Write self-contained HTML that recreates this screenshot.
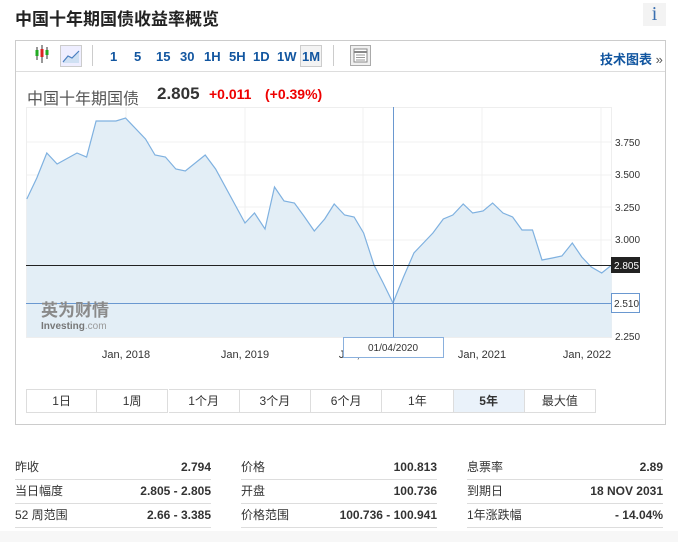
<!DOCTYPE html>
<html><head><meta charset="utf-8"><style>
*{margin:0;padding:0;box-sizing:border-box}
body{width:678px;height:542px;background:#fff;font-family:"Liberation Sans","Noto Sans CJK SC",sans-serif;position:relative;overflow:hidden;color:#333}
.a{position:absolute;white-space:nowrap}
.tb{color:#1256a0;font-weight:bold;font-size:13px;top:49px}
.btn{position:absolute;top:389px;height:24px;width:71.25px;border:1px solid #ddd;border-left:none;font-size:12px;text-align:center;line-height:22px;color:#333}
.row{position:absolute;height:24px;border-bottom:1px solid #ddd;font-size:12px;line-height:22px}
.row .v{position:absolute;right:0;top:0;font-weight:bold}
</style></head><body>
<div class="a" style="left:15px;top:5px;font-size:17px;font-weight:bold;color:#222">中国十年期国债收益率概览</div>
<div class="a" style="left:643px;top:3px;width:23px;height:23px;background:#f3f3f3;color:#3a6fb0;font-family:'Liberation Serif',serif;font-size:20px;text-align:center;line-height:23px">i</div>

<div class="a" style="left:15px;top:40px;width:651px;height:385px;border:1px solid #ccc"></div>
<div class="a" style="left:16px;top:71px;width:649px;height:1px;background:#ddd"></div>
<svg class="a" style="left:0;top:0" width="678" height="80">
<g stroke="#333" stroke-width="1"><line x1="37" y1="47" x2="37" y2="60"/><line x1="42" y1="45" x2="42" y2="63"/><line x1="47" y1="47" x2="47" y2="59"/></g>
<rect x="35.5" y="50" width="3" height="6" fill="#2a2"/><rect x="40.5" y="49" width="3" height="8" fill="#d22"/><rect x="45.5" y="50" width="3" height="5" fill="#2a2"/>
<rect x="60.5" y="45.5" width="21" height="21" fill="#eef" stroke="#ccc"/>
<path d="M63 62 L68 56 L72 58 L79 51 L79 63 L63 63Z" fill="#cfe0f3"/>
<path d="M63 62 L68 56 L72 58 L79 51" fill="none" stroke="#4a7fc0" stroke-width="1.2"/>
<line x1="92.5" y1="45" x2="92.5" y2="66" stroke="#ccc"/>
<rect x="300.5" y="45.5" width="21" height="21" fill="#f3f3f3" stroke="#ccc"/>
<line x1="333.5" y1="45" x2="333.5" y2="66" stroke="#ccc"/>
<rect x="350.5" y="45.5" width="20" height="20" fill="#f0f0f0" stroke="#aaa"/>
<rect x="354" y="49" width="13" height="13" fill="#fff" stroke="#888"/>
<line x1="354" y1="52" x2="367" y2="52" stroke="#888" stroke-width="2"/>
<g stroke="#999"><line x1="356" y1="55" x2="365" y2="55"/><line x1="356" y1="57.5" x2="365" y2="57.5"/><line x1="356" y1="60" x2="365" y2="60"/></g>
<path d="M145 87 L148 83 L151 87 L149.5 87 L149.5 89 L146.5 89 L146.5 87Z" fill="#e00"/>
</svg>
<div class="a tb" style="left:110px">1</div><div class="a tb" style="left:134px">5</div><div class="a tb" style="left:156px">15</div><div class="a tb" style="left:180px">30</div><div class="a tb" style="left:204px">1H</div><div class="a tb" style="left:229px">5H</div><div class="a tb" style="left:253px">1D</div><div class="a tb" style="left:277px">1W</div><div class="a tb" style="left:302px">1M</div>
<div class="a" style="left:600px;top:49px;font-size:13px;font-weight:bold;color:#1256a0">技术图表 <span style="font-weight:normal;color:#555">»</span></div>

<div class="a" style="left:27px;top:85px;font-size:16px;color:#555">中国十年期国债</div>
<div class="a" style="left:157px;top:84px;font-size:17px;font-weight:bold;color:#333">2.805</div>
<div class="a" style="left:209px;top:86px;font-size:14px;font-weight:bold;color:#e00">+0.011</div>
<div class="a" style="left:265px;top:86px;font-size:14px;font-weight:bold;color:#e00">(+0.39%)</div>

<svg class="a" style="left:0;top:0" width="678" height="380" font-family="Liberation Sans, sans-serif">
<rect x="26.5" y="107.5" width="585" height="230" fill="#fff" stroke="#eee"/>
<g stroke="#f0f0f0"><line x1="126" y1="108" x2="126" y2="337"/><line x1="245" y1="108" x2="245" y2="337"/><line x1="363" y1="108" x2="363" y2="337"/><line x1="482" y1="108" x2="482" y2="337"/><line x1="601" y1="108" x2="601" y2="337"/><line x1="27" y1="142" x2="611" y2="142"/><line x1="27" y1="175" x2="611" y2="175"/><line x1="27" y1="207" x2="611" y2="207"/><line x1="27" y1="240" x2="611" y2="240"/></g>
<path d="M26.8,199 L36.8,178 L46.8,153 L57.1,164 L77,153 L86.6,157 L96.1,121 L116,121 L125.5,118 L145.5,139 L155,155 L165.4,157 L175.8,169 L185.3,171 L205.2,155 L215.6,169 L245,223 L254.5,213 L265,229 L274.5,187 L284,201 L294.4,203 L303.9,216 L314.3,231 L324.7,219 L334.2,204 L344.6,215 L354.1,217 L363.6,233 L374,265 L382.7,282 L393,303 L403.5,277 L413.9,253 L423.4,243 L432.9,233 L443.3,219 L452.8,215 L463.2,204 L472.7,213 L483.1,211 L492.6,203 L503,213 L512.6,217 L522,230 L532.5,230 L542,260 L552.4,258 L561.9,256 L572.3,243 L581.8,257 L591.3,267 L601.7,273 L611.7,265 L611.7,337 L26.8,337Z" fill="#e3eef6"/>
<path d="M26.8,199 L36.8,178 L46.8,153 L57.1,164 L77,153 L86.6,157 L96.1,121 L116,121 L125.5,118 L145.5,139 L155,155 L165.4,157 L175.8,169 L185.3,171 L205.2,155 L215.6,169 L245,223 L254.5,213 L265,229 L274.5,187 L284,201 L294.4,203 L303.9,216 L314.3,231 L324.7,219 L334.2,204 L344.6,215 L354.1,217 L363.6,233 L374,265 L382.7,282 L393,303 L403.5,277 L413.9,253 L423.4,243 L432.9,233 L443.3,219 L452.8,215 L463.2,204 L472.7,213 L483.1,211 L492.6,203 L503,213 L512.6,217 L522,230 L532.5,230 L542,260 L552.4,258 L561.9,256 L572.3,243 L581.8,257 L591.3,267 L601.7,273 L611.7,265" fill="none" stroke="#7fb1e0" stroke-width="1.2"/>
<line x1="26" y1="265.5" x2="611" y2="265.5" stroke="#222"/>
<line x1="26" y1="303.5" x2="611" y2="303.5" stroke="#6a98d0"/>
<line x1="393.5" y1="107" x2="393.5" y2="337" stroke="#6a98d0"/>
<text x="41" y="316" font-size="17" font-weight="bold" fill="#8a8a8a" font-family="Noto Sans CJK SC, sans-serif">英为财情</text>
<text x="41" y="329" font-size="10" font-weight="bold" fill="#777">Investing<tspan font-weight="normal" fill="#999">.com</tspan></text>
<g font-size="10" fill="#333"><text x="615" y="146">3.750</text><text x="615" y="178">3.500</text><text x="615" y="211">3.250</text><text x="615" y="243">3.000</text><text x="615" y="340">2.250</text></g>
<rect x="611" y="257" width="29" height="16" fill="#222"/><text x="614" y="269" font-size="10" fill="#fff">2.805</text>
<rect x="611.5" y="293.5" width="28" height="19" fill="#fff" stroke="#6a98d0"/><text x="614" y="307" font-size="10" fill="#333">2.510</text>
<g font-size="11" fill="#333" text-anchor="middle"><text x="126" y="358">Jan, 2018</text><text x="245" y="358">Jan, 2019</text><text x="363" y="358">Jan, 2020</text><text x="482" y="358">Jan, 2021</text><text x="587" y="358">Jan, 2022</text></g>
<rect x="343.5" y="337.5" width="100" height="20" fill="#fff" stroke="#8ab0dd"/>
<text x="393" y="351" font-size="10" fill="#333" text-anchor="middle">01/04/2020</text>
</svg>

<div class="btn" style="left:26px;border-left:1px solid #ddd">1日</div>
<div class="btn" style="left:97px">1周</div>
<div class="btn" style="left:168.5px">1个月</div>
<div class="btn" style="left:239.75px">3个月</div>
<div class="btn" style="left:311px">6个月</div>
<div class="btn" style="left:382.25px">1年</div>
<div class="btn" style="left:453.5px;background:#eaf2fa;font-weight:bold">5年</div>
<div class="btn" style="left:524.75px">最大值</div>

<div class="row" style="left:15px;top:456px;width:196px">昨收<span class="v">2.794</span></div>
<div class="row" style="left:15px;top:480px;width:196px">当日幅度<span class="v">2.805 - 2.805</span></div>
<div class="row" style="left:15px;top:504px;width:196px">52 周范围<span class="v">2.66 - 3.385</span></div>
<div class="row" style="left:241px;top:456px;width:196px">价格<span class="v">100.813</span></div>
<div class="row" style="left:241px;top:480px;width:196px">开盘<span class="v">100.736</span></div>
<div class="row" style="left:241px;top:504px;width:196px">价格范围<span class="v">100.736 - 100.941</span></div>
<div class="row" style="left:467px;top:456px;width:196px">息票率<span class="v">2.89</span></div>
<div class="row" style="left:467px;top:480px;width:196px">到期日<span class="v">18 NOV 2031</span></div>
<div class="row" style="left:467px;top:504px;width:196px">1年涨跌幅<span class="v">- 14.04%</span></div>
<div class="a" style="left:0;top:531px;width:678px;height:11px;background:#f7f7f7"></div>
</body></html>
